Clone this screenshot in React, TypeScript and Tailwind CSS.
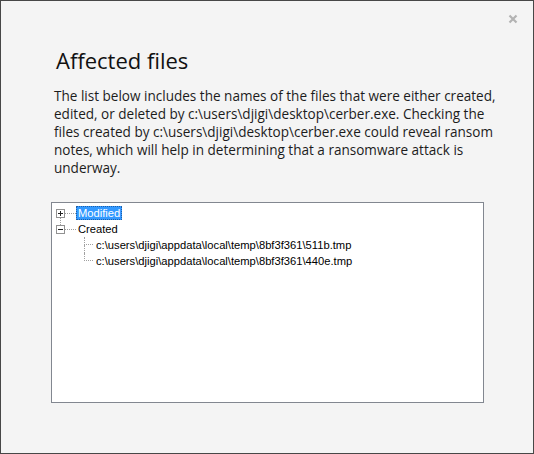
import { ReactNode } from 'react';

const files = [
  'c:\\users\\djigi\\appdata\\local\\temp\\8bf3f361\\511b.tmp',
  'c:\\users\\djigi\\appdata\\local\\temp\\8bf3f361\\440e.tmp',
];

function Expander({ open, connectDown = false }: { open: boolean; connectDown?: boolean }) {
  return (
    <div className="relative h-[9px] w-[9px]">
      <svg width="9" height="9" viewBox="0 0 9 9" className="block">
        <rect x="0.5" y="0.5" width="8" height="8" fill="#fff" stroke="#919191" />
        <line x1="2" y1="4.5" x2="7" y2="4.5" stroke="#222" />
        {!open && <line x1="4.5" y1="2" x2="4.5" y2="7" stroke="#222" />}
      </svg>
      {connectDown && (
        <div className="absolute left-[4px] top-[9px] h-[7px] border-l border-dotted border-[#a0a0a0]" />
      )}
    </div>
  );
}

function RootRow({ children, open, connectDown, selected }: { children: ReactNode; open: boolean; connectDown?: boolean; selected?: boolean }) {
  return (
    <div className="flex h-4 items-center">
      <Expander open={open} connectDown={connectDown} />
      <div className="w-[11px] border-t border-dotted border-[#a0a0a0]" />
      <span
        className={
          selected
            ? 'border border-dotted border-[#1d5fa8] bg-[#3399ff] px-[1px] leading-[12px] text-white'
            : 'border border-transparent px-[1px] leading-[12px] text-black'
        }
      >
        {children}
      </span>
    </div>
  );
}

function ChildRow({ label, last }: { label: string; last: boolean }) {
  return (
    <div className="flex h-4 items-stretch">
      <div className="flex w-[9px] flex-col">
        <div className="h-1/2 border-b border-l border-dotted border-[#a0a0a0]" />
        <div className={last ? 'h-1/2' : 'h-1/2 border-l border-dotted border-[#a0a0a0]'} />
      </div>
      <span className="ml-[3px] self-center leading-[12px] text-black">{label}</span>
    </div>
  );
}

export default function App() {
  return (
    <div className="relative h-[454px] w-[534px] overflow-hidden border border-[#474747] bg-[#f4f4f4] font-['Open_Sans',sans-serif]">
      <button className="absolute right-[15px] top-[12px] flex h-[11px] w-[11px] items-center justify-center">
        <svg width="10" height="10" viewBox="0 0 10 10">
          <path d="M1.5 1.5l7 7M8.5 1.5l-7 7" stroke="#b3b3b3" strokeWidth="2.2" />
        </svg>
      </button>

      <h1 className="ml-[55px] mt-[45px] text-[22px] leading-[28px] text-[#111]">Affected files</h1>

      <p className="ml-[53px] mt-[13px] w-[450px] text-[13.55px] leading-[18px] text-[#1c1c1c]">
        The list below includes the names of the files that were either created, edited, or deleted by
        c:\users\djigi\desktop\cerber.exe. Checking the files created by c:\users\djigi\desktop\cerber.exe could
        reveal ransom notes, which will help in determining that a ransomware attack is underway.
      </p>

      <div className="ml-[50px] mt-[25px] h-[201px] w-[433px] border border-[#828790] bg-white pl-[4px] pt-[2px] font-['Liberation_Sans',Arial,sans-serif] text-[11.2px]">
        <RootRow open={false} connectDown selected>
          Modified
        </RootRow>
        <RootRow open>Created</RootRow>
        <div className="ml-[28px]">
          {files.map((f, i) => (
            <ChildRow key={f} label={f} last={i === files.length - 1} />
          ))}
        </div>
      </div>
    </div>
  );
}
